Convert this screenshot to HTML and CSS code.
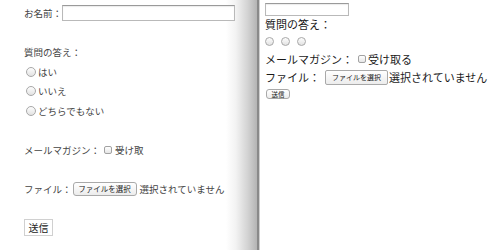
FILE: index.html
```html
<!DOCTYPE html>
<html lang="ja">
<head>
<meta charset="utf-8">
<link rel="stylesheet" href="styles.css">
</head>
<body>
<div class="stage">
  <section class="panel styled">
    <div class="row name-row"><span>お名前：</span><span class="text-input wide"></span></div>
    <div class="row gap">質問の答え：</div>
    <div class="row"><span class="radio"></span>はい</div>
    <div class="row"><span class="radio"></span>いいえ</div>
    <div class="row"><span class="radio"></span>どちらでもない</div>
    <div class="row gap">メールマガジン：<span class="check"></span>受け取</div>
    <div class="row gap">ファイル：<span class="file-btn">ファイルを選択</span>選択されていません</div>
    <div class="row gap submit-row"><span class="submit">送信</span></div>
  </section>
  <div class="divider"></div>
  <section class="panel plain">
    <div class="prow r-input"><span class="text-input narrow"></span></div>
    <div class="prow r-q">質問の答え：</div>
    <div class="prow r-radios"><span class="radio"></span><span class="radio"></span><span class="radio"></span></div>
    <div class="prow r-mail">メールマガジン：<span class="check"></span>受け取る</div>
    <div class="prow r-file">ファイル：<span class="file-btn">ファイルを選択</span>選択されていません</div>
    <div class="prow r-submit"><span class="submit small">送信</span></div>
  </section>
</div>
</body>
</html>
```
FILE: styles.css
```css
* { box-sizing: border-box; }
html, body { margin: 0; padding: 0; background: #fff; }
body { width: 500px; height: 250px; overflow: hidden; font-family: "Noto Sans CJK JP", "Noto Sans", sans-serif; }
.stage { display: flex; height: 250px; }

.panel.styled {
  width: 257px;
  padding: 3px 0 0 24px;
  font-size: 9.5px;
  color: #444;
  background: linear-gradient(to right, #fff 0, #fff 226px, #f2f2f2 236px, #d2d2d2 248px, #b4b4b4 257px);
}
.divider {
  width: 3px;
  background: linear-gradient(to right, #8a8a8a 0, #8a8a8a 2px, #cfcfcf 2px);
}
.row { display: flex; align-items: center; height: 19.5px; white-space: nowrap; }
.row.gap { margin-top: 19.5px; }
.name-row { height: 20px; }
.text-input {
  display: inline-block;
  border: 1px solid #b9b9b9;
  border-top-color: #9a9a9a;
  background: #fff;
  box-shadow: inset 0 1px 1px rgba(0,0,0,0.08);
}
.text-input.wide { width: 173px; height: 16px; }
.radio {
  display: inline-block;
  width: 10px; height: 10px;
  border-radius: 50%;
  border: 1px solid #a8a8a8;
  background: linear-gradient(#fdfdfd, #e2e2e2);
  margin: 0 2px 0 2px;
}
.check {
  display: inline-block;
  width: 8px; height: 8px;
  border: 1px solid #a2a2a2;
  border-radius: 2px;
  background: linear-gradient(#fff, #e6e6e6);
  margin: 0 3px 0 4px;
}
.file-btn {
  display: inline-flex; align-items: center; justify-content: center;
  width: 64px;
  height: 14px;
  margin: 0 3px 0 1px;
  font-size: 7.5px;
  color: #222;
  border: 1px solid #a9a9a9;
  border-radius: 3px;
  background: linear-gradient(#ffffff, #ececec);
}
.submit {
  display: inline-flex; align-items: center; justify-content: center;
  width: 29px; height: 17px;
  font-size: 10px;
  color: #222;
  border: 1px solid #d0d0d0;
  background: #fff;
}
.submit-row { margin-top: 18px; }

.panel.plain {
  flex: 1;
  padding: 3px 0 0 5px;
  font-size: 11px;
  color: #1a1a1a;
}
.prow { display: flex; align-items: center; white-space: nowrap; }
.r-input { height: 13px; }
.r-q { height: 16px; }
.r-radios { height: 19px; }
.r-mail { height: 15px; }
.r-file { height: 22px; }
.r-submit { height: 11px; }
.text-input.narrow { width: 84px; height: 13px; }
.plain .radio { width: 9px; height: 9px; margin: 0 7px 0 0; }
.plain .check { margin: 0 2px 0 5px; }
.plain .file-btn { width: 63px; height: 15px; font-size: 7px; margin: 0 1px 0 5px; border-radius: 2px; }
.submit.small {
  width: 24px; height: 10px; font-size: 6.5px; border-radius: 3px; border: 1px solid #a9a9a9;
  background: linear-gradient(#fff, #ececec);
  margin-left: 1px;
}
```
